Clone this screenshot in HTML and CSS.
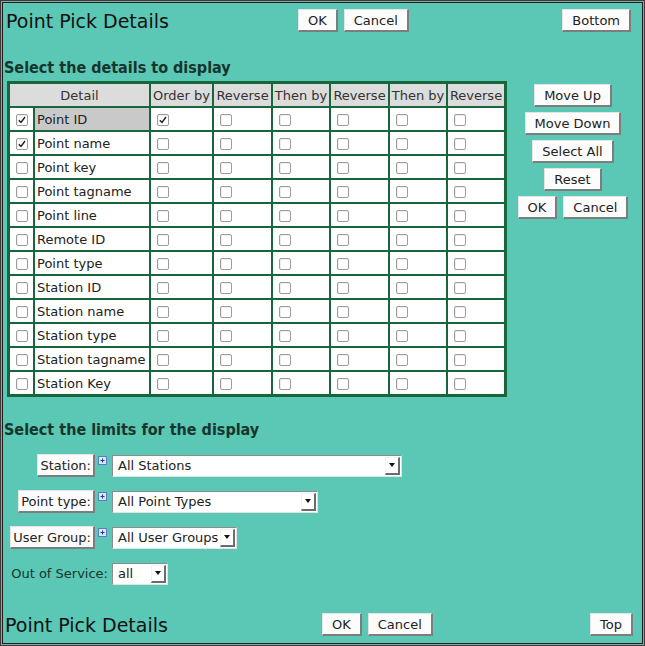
FILE: index.html
```html
<!DOCTYPE html>
<html>
<head>
<meta charset="utf-8">
<title>Point Pick Details</title>
<link rel="stylesheet" href="styles.css">
</head>
<body>
<div class="page">
  <div class="bar bar-top">
    <h1 class="title title-top">Point Pick Details</h1>
    <div class="pair"><button class="btn">OK</button><button class="btn">Cancel</button></div>
    <div></div>
    <button class="btn end-top">Bottom</button>
  </div>

  <h2 class="section section-details">Select the details to display</h2>
  <div class="details">
    <table class="grid">
      <colgroup>
        <col class="w-cb"><col class="w-name"><col class="w-ord"><col class="w-rev1"><col class="w-then"><col class="w-rev1"><col class="w-then"><col class="w-then">
      </colgroup>
      <tr><th colspan="2">Detail</th><th>Order by</th><th>Reverse</th><th>Then by</th><th>Reverse</th><th>Then by</th><th>Reverse</th></tr>
      <tr><td class="c0"><span class="cb"><svg viewBox="0 0 12 12"><path d="M2.2 6.2 L4.8 9 L9.6 2.4" /></svg></span></td><td class="name sel">Point ID</td><td class="o"><span class="cb"><svg viewBox="0 0 12 12"><path d="M2.2 6.2 L4.8 9 L9.6 2.4" /></svg></span></td><td class="o"><span class="cb"></span></td><td class="o"><span class="cb"></span></td><td class="o"><span class="cb"></span></td><td class="o"><span class="cb"></span></td><td class="o"><span class="cb"></span></td></tr>
      <tr><td class="c0"><span class="cb"><svg viewBox="0 0 12 12"><path d="M2.2 6.2 L4.8 9 L9.6 2.4" /></svg></span></td><td class="name">Point name</td><td class="o"><span class="cb"></span></td><td class="o"><span class="cb"></span></td><td class="o"><span class="cb"></span></td><td class="o"><span class="cb"></span></td><td class="o"><span class="cb"></span></td><td class="o"><span class="cb"></span></td></tr>
      <tr><td class="c0"><span class="cb"></span></td><td class="name">Point key</td><td class="o"><span class="cb"></span></td><td class="o"><span class="cb"></span></td><td class="o"><span class="cb"></span></td><td class="o"><span class="cb"></span></td><td class="o"><span class="cb"></span></td><td class="o"><span class="cb"></span></td></tr>
      <tr><td class="c0"><span class="cb"></span></td><td class="name">Point tagname</td><td class="o"><span class="cb"></span></td><td class="o"><span class="cb"></span></td><td class="o"><span class="cb"></span></td><td class="o"><span class="cb"></span></td><td class="o"><span class="cb"></span></td><td class="o"><span class="cb"></span></td></tr>
      <tr><td class="c0"><span class="cb"></span></td><td class="name">Point line</td><td class="o"><span class="cb"></span></td><td class="o"><span class="cb"></span></td><td class="o"><span class="cb"></span></td><td class="o"><span class="cb"></span></td><td class="o"><span class="cb"></span></td><td class="o"><span class="cb"></span></td></tr>
      <tr><td class="c0"><span class="cb"></span></td><td class="name">Remote ID</td><td class="o"><span class="cb"></span></td><td class="o"><span class="cb"></span></td><td class="o"><span class="cb"></span></td><td class="o"><span class="cb"></span></td><td class="o"><span class="cb"></span></td><td class="o"><span class="cb"></span></td></tr>
      <tr><td class="c0"><span class="cb"></span></td><td class="name">Point type</td><td class="o"><span class="cb"></span></td><td class="o"><span class="cb"></span></td><td class="o"><span class="cb"></span></td><td class="o"><span class="cb"></span></td><td class="o"><span class="cb"></span></td><td class="o"><span class="cb"></span></td></tr>
      <tr><td class="c0"><span class="cb"></span></td><td class="name">Station ID</td><td class="o"><span class="cb"></span></td><td class="o"><span class="cb"></span></td><td class="o"><span class="cb"></span></td><td class="o"><span class="cb"></span></td><td class="o"><span class="cb"></span></td><td class="o"><span class="cb"></span></td></tr>
      <tr><td class="c0"><span class="cb"></span></td><td class="name">Station name</td><td class="o"><span class="cb"></span></td><td class="o"><span class="cb"></span></td><td class="o"><span class="cb"></span></td><td class="o"><span class="cb"></span></td><td class="o"><span class="cb"></span></td><td class="o"><span class="cb"></span></td></tr>
      <tr><td class="c0"><span class="cb"></span></td><td class="name">Station type</td><td class="o"><span class="cb"></span></td><td class="o"><span class="cb"></span></td><td class="o"><span class="cb"></span></td><td class="o"><span class="cb"></span></td><td class="o"><span class="cb"></span></td><td class="o"><span class="cb"></span></td></tr>
      <tr><td class="c0"><span class="cb"></span></td><td class="name">Station tagname</td><td class="o"><span class="cb"></span></td><td class="o"><span class="cb"></span></td><td class="o"><span class="cb"></span></td><td class="o"><span class="cb"></span></td><td class="o"><span class="cb"></span></td><td class="o"><span class="cb"></span></td></tr>
      <tr><td class="c0"><span class="cb"></span></td><td class="name">Station Key</td><td class="o"><span class="cb"></span></td><td class="o"><span class="cb"></span></td><td class="o"><span class="cb"></span></td><td class="o"><span class="cb"></span></td><td class="o"><span class="cb"></span></td><td class="o"><span class="cb"></span></td></tr>
    </table>
    <div class="side">
      <button class="btn">Move Up</button>
      <button class="btn">Move Down</button>
      <button class="btn">Select All</button>
      <button class="btn">Reset</button>
      <div class="pair"><button class="btn">OK</button><button class="btn">Cancel</button></div>
    </div>
  </div>

  <h2 class="section section-limits">Select the limits for the display</h2>
  <div class="limits">
    <button class="btn lbtn">Station:</button>
    <svg class="plus" viewBox="0 0 9 9"><rect x="0.5" y="0.5" width="8" height="8" fill="#dbe6fb" stroke="#5a7dc8"/><path d="M2.5 4.5 H6.5 M4.5 2.5 V6.5" stroke="#1d3f8f" stroke-width="1"/></svg>
    <div class="select sel-station"><span class="val">All Stations</span><span class="arrow"><span class="tri"></span></span></div>

    <button class="btn lbtn">Point type:</button>
    <svg class="plus" viewBox="0 0 9 9"><rect x="0.5" y="0.5" width="8" height="8" fill="#dbe6fb" stroke="#5a7dc8"/><path d="M2.5 4.5 H6.5 M4.5 2.5 V6.5" stroke="#1d3f8f" stroke-width="1"/></svg>
    <div class="select sel-type"><span class="val">All Point Types</span><span class="arrow"><span class="tri"></span></span></div>

    <button class="btn lbtn">User Group:</button>
    <svg class="plus" viewBox="0 0 9 9"><rect x="0.5" y="0.5" width="8" height="8" fill="#dbe6fb" stroke="#5a7dc8"/><path d="M2.5 4.5 H6.5 M4.5 2.5 V6.5" stroke="#1d3f8f" stroke-width="1"/></svg>
    <div class="select sel-group"><span class="val">All User Groups</span><span class="arrow"><span class="tri"></span></span></div>

    <label class="oos-label">Out of Service:</label>
    <div class="select sel-oos"><span class="val">all</span><span class="arrow"><span class="tri"></span></span></div>
  </div>

  <div class="bar bar-bottom">
    <h1 class="title title-bottom">Point Pick Details</h1>
    <div class="pair"><button class="btn">OK</button><button class="btn">Cancel</button></div>
    <div></div>
    <button class="btn end-bottom">Top</button>
  </div>
</div>
</body>
</html>
```

FILE: styles.css
```css
* { box-sizing: border-box; }

body {
  margin: 0;
  font-family: "DejaVu Sans", "Liberation Sans", sans-serif;
  font-size: 13px;
  color: #222;
}

.page {
  width: 645px;
  height: 646px;
  background: #5bc7b5;
  border: 1px solid #3a3a3a;
  box-shadow: inset 0 0 0 1px #8fa8a2, inset 0 0 0 2px #1e1e1e;
  padding: 0 2px 0 3px;
  overflow: hidden;
}

.bar {
  display: grid;
  align-items: center;
  height: 23px;
}
.bar-top { grid-template-columns: 294px auto 1fr auto; margin-top: 8px; }
.bar-bottom { grid-template-columns: 318px auto 1fr auto; margin-top: 28px; }

.title {
  margin: 0;
  font-size: 19px;
  font-weight: normal;
  line-height: 21px;
  padding-top: 2px;
  color: #111;
  white-space: nowrap;
}
.title-top { margin-left: 2px; }
.title-bottom { margin-left: 1px; }

.pair { display: flex; gap: 6px; }

.btn {
  height: 23px;
  padding: 0 9px;
  font: 13px "DejaVu Sans", "Liberation Sans", sans-serif;
  color: #222;
  background: #fcfcfc;
  border-style: solid;
  border-width: 1px 2px 2px 1px;
  border-color: #e4e4e4 #7d7d7d #7d7d7d #e4e4e4;
  border-radius: 0;
  white-space: nowrap;
}
.end-top { margin-right: 11px; }
.end-bottom { margin-right: 9px; }

.section {
  font-family: "DejaVu Sans Condensed", "DejaVu Sans", sans-serif;
  font-stretch: condensed;
  font-weight: bold;
  font-size: 16px;
  line-height: 20px;
  color: #17352c;
  margin: 0;
  white-space: nowrap;
}
.section-details { margin: 26px 0 3px; }
.section-limits { margin: 23px 0 0; }

.details { display: flex; align-items: flex-start; }

.grid {
  margin-left: 3px;
  border: 1px solid #17663c;
  border-collapse: separate;
  border-spacing: 2px;
  background: #17663c;
  table-layout: fixed;
  width: 500px;
}
.w-cb { width: 23px; }
.w-name { width: 114px; }
.w-ord { width: 61px; }
.w-rev1 { width: 57px; }
.w-then { width: 56px; }

.grid th {
  height: 22px;
  padding: 0;
  background: #dcdcdc;
  font-weight: normal;
  color: #333;
  white-space: nowrap;
}
.grid td {
  height: 22px;
  padding: 0;
  background: #fff;
  color: #222;
}
.grid td.name { padding-left: 2px; white-space: nowrap; }
.grid td.sel { background: #c9c9c9; }
.grid td.c0 { text-align: center; }
.grid td.o { padding-left: 6px; }

.cb {
  display: inline-block;
  width: 12px;
  height: 12px;
  border: 1px solid #9d9d9d;
  border-radius: 2px;
  background: #fff;
  vertical-align: middle;
  box-shadow: inset 1px 1px 0 #eee;
}
.cb svg { display: block; width: 10px; height: 10px; }
.cb path { fill: none; stroke: #1e1e1e; stroke-width: 1.7; }

.side {
  flex: 1;
  display: flex;
  flex-direction: column;
  align-items: center;
  gap: 5px;
  padding-top: 3px;
  padding-right: 3px;
}

.limits {
  display: grid;
  grid-template-columns: 91px 17px auto;
  grid-auto-rows: 23px;
  row-gap: 13px;
  margin-top: 14px;
  justify-content: start;
  align-items: center;
}
.lbtn { justify-self: end; padding: 0 2px; }
.plus {
  align-self: start;
  width: 9px;
  height: 9px;
  margin: 2px 0 0 3px;
}
.oos-label {
  grid-column: 1 / 3;
  justify-self: end;
  padding-right: 4px;
  color: #17352c;
  white-space: nowrap;
}

.select {
  justify-self: start;
  display: flex;
  align-items: center;
  height: 22px;
  background: #fff;
  border: 1px solid;
  border-color: #8c8c8c #e2e2e2 #e2e2e2 #8c8c8c;
  padding: 1px;
}
.select .val { flex: 1; padding-left: 4px; white-space: nowrap; color: #222; }
.select .arrow {
  width: 15px;
  height: 18px;
  display: flex;
  align-items: center;
  justify-content: center;
  background: #fff;
  border-style: solid;
  border-width: 1px 2px 2px 1px;
  border-color: #f2f2f2 #6b6b6b #6b6b6b #f2f2f2;
}
.select .tri {
  width: 0;
  height: 0;
  border-left: 3px solid transparent;
  border-right: 3px solid transparent;
  border-top: 4px solid #111;
}
.sel-station { width: 290px; }
.sel-type { width: 206px; }
.sel-group { width: 125px; }
.sel-oos { width: 56px; }
```
